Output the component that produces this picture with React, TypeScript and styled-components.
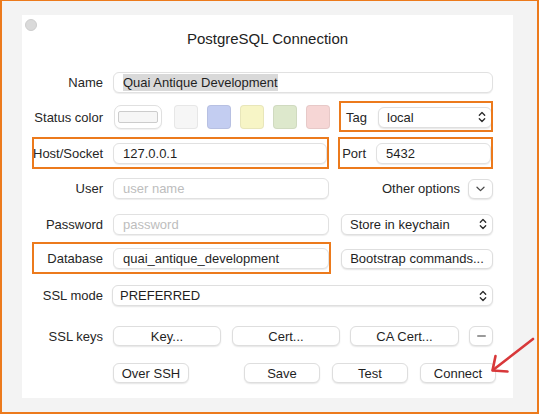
import React from "react";
import styled, { createGlobalStyle } from "styled-components";

const Global = createGlobalStyle`
  html, body { margin: 0; padding: 0; background: #f3f3f3; }
  body { font-family: "Liberation Sans", Arial, sans-serif; font-size: 13px; color: #262626; }
  * { box-sizing: border-box; }
`;

const ORANGE = "#ec7a1c";

const Frame = styled.div`
  position: relative;
  width: 539px;
  height: 414px;
  border: 2px solid ${ORANGE};
  border-top-width: 1px;
  background: #f3f3f3;
  padding: 14px 0 0 20px;
`;

const Panel = styled.div`
  position: relative;
  width: 491px;
  height: 383px;
  background: #ffffff;
`;

const WindowDot = styled.div`
  position: absolute;
  left: 3px;
  top: 4px;
  width: 12px;
  height: 12px;
  border-radius: 50%;
  background: #dadada;
  border: 1px solid #cdcdcd;
`;

const TitleBar = styled.div`
  height: 50px;
  padding-top: 14px;
  text-align: center;
  font-size: 15px;
  line-height: 20px;
  color: #222;
`;

const Form = styled.div`
  display: flex;
  flex-direction: column;
`;

const Row = styled.div<{ $h: number }>`
  display: flex;
  align-items: center;
  height: ${(p) => p.$h}px;
  padding: 0 20px 0 11px;
`;

const Label = styled.div`
  flex: none;
  width: 70px;
  margin-right: 10px;
  text-align: right;
  white-space: nowrap;
  font-size: 13px;
`;

const InlineLabel = styled.div`
  flex: none;
  margin-right: ${(p: { $gap?: number }) => p.$gap ?? 10}px;
  white-space: nowrap;
`;

const Marked = styled.div<{ $t: number; $r: number; $b: number; $l: number; $ml?: string; $mr?: number }>`
  position: relative;
  display: flex;
  align-items: center;
  margin-left: ${(p) => p.$ml ?? "0"};
  margin-right: ${(p) => p.$mr ?? 0}px;
  &::after {
    content: "";
    position: absolute;
    top: ${(p) => -p.$t}px;
    right: ${(p) => -p.$r}px;
    bottom: ${(p) => -p.$b}px;
    left: ${(p) => -p.$l}px;
    border: 2px solid ${ORANGE};
    pointer-events: none;
  }
`;

const Field = styled.div<{ $w?: number; $placeholder?: boolean }>`
  flex: ${(p) => (p.$w ? "none" : "1")};
  width: ${(p) => (p.$w ? `${p.$w}px` : "auto")};
  height: 21px;
  border: 1px solid #e1e1e1;
  border-radius: 6px;
  background: #fff;
  box-shadow: 0 1px 1px rgba(0, 0, 0, 0.07);
  padding: 0 9px;
  display: flex;
  align-items: center;
  white-space: nowrap;
  overflow: hidden;
  color: ${(p) => (p.$placeholder ? "#bdbdbd" : "#1f1f1f")};
`;

const Selected = styled.span`
  background: #d9d9d9;
  padding: 1px 0;
`;

const Popup = styled.div<{ $w?: number; $ml?: string; $pl?: number }>`
  flex: ${(p) => (p.$w ? "none" : "1")};
  width: ${(p) => (p.$w ? `${p.$w}px` : "auto")};
  margin-left: ${(p) => p.$ml ?? "0"};
  height: 21px;
  border: 1px solid #dfdfdf;
  border-radius: 6px;
  background: #fff;
  box-shadow: 0 1px 1.5px rgba(0, 0, 0, 0.1);
  padding: 0 5px 0 ${(p) => p.$pl ?? 8}px;
  display: flex;
  align-items: center;
  justify-content: space-between;
  white-space: nowrap;
  color: #1f1f1f;
`;

const Button = styled.div<{ $w: number; $ml?: string; $mr?: number }>`
  flex: none;
  width: ${(p) => p.$w}px;
  height: 20px;
  margin-left: ${(p) => p.$ml ?? "0"};
  margin-right: ${(p) => p.$mr ?? 0}px;
  border: 1px solid #dedede;
  border-radius: 6px;
  background: #fff;
  box-shadow: 0 1px 1.5px rgba(0, 0, 0, 0.1);
  display: flex;
  align-items: center;
  justify-content: center;
  white-space: nowrap;
  color: #1f1f1f;
`;

const ButtonGroup = styled.div<{ $gap: number; $ml?: string }>`
  display: flex;
  align-items: center;
  gap: ${(p) => p.$gap}px;
  margin-left: ${(p) => p.$ml ?? "0"};
`;

const ColorWell = styled.div`
  flex: none;
  width: 48px;
  height: 24px;
  margin-left: 1px;
  border: 1px solid #e0e0e0;
  border-radius: 7px;
  background: #fff;
  box-shadow: 0 1px 1px rgba(0, 0, 0, 0.06);
  display: flex;
  align-items: center;
  justify-content: center;
`;

const WellInner = styled.div`
  width: 40px;
  height: 12px;
  border: 1px solid #cccccc;
  border-radius: 2px;
  background: #f6f6f6;
`;

const Swatches = styled.div`
  display: flex;
  gap: 9px;
  margin-left: 12px;
`;

const Swatch = styled.div<{ $c: string }>`
  width: 24px;
  height: 24px;
  border-radius: 4px;
  background: ${(p) => p.$c};
  border: 1px solid rgba(0, 0, 0, 0.06);
`;

const OtherText = styled.div`
  margin-left: auto;
  margin-right: 8px;
  white-space: nowrap;
`;

const IconButton = styled.div<{ $w: number }>`
  flex: none;
  width: ${(p) => p.$w}px;
  height: 20px;
  border: 1px solid #dedede;
  border-radius: 6px;
  background: #fff;
  box-shadow: 0 1px 1.5px rgba(0, 0, 0, 0.1);
  display: flex;
  align-items: center;
  justify-content: center;
`;

const MinusBar = styled.div`
  width: 9px;
  height: 2px;
  border-radius: 1px;
  background: #9a9a9a;
`;

const Annotation = styled.svg`
  position: absolute;
  left: -2px;
  top: -1px;
  width: 539px;
  height: 414px;
  pointer-events: none;
`;

const UpDown = () => (
  <svg width="8" height="12" viewBox="0 0 8 12" fill="none">
    <path d="M1.3 4.3 L4 1.5 L6.7 4.3" stroke="#2b2b2b" strokeWidth="1.3" strokeLinecap="round" strokeLinejoin="round" />
    <path d="M1.3 7.7 L4 10.5 L6.7 7.7" stroke="#2b2b2b" strokeWidth="1.3" strokeLinecap="round" strokeLinejoin="round" />
  </svg>
);

const ChevronDown = () => (
  <svg width="9" height="6" viewBox="0 0 9 6" fill="none">
    <path d="M1 1.2 L4.5 4.6 L8 1.2" stroke="#4a4a4a" strokeWidth="1.3" strokeLinecap="round" strokeLinejoin="round" />
  </svg>
);

export default function App() {
  return (
    <>
      <Global />
      <Frame>
        <Panel>
          <WindowDot />
          <TitleBar>PostgreSQL Connection</TitleBar>
          <Form>
            <Row $h={35}>
              <Label>Name</Label>
              <Field>
                <Selected>Quai Antique Development</Selected>
              </Field>
            </Row>

            <Row $h={34}>
              <Label>Status color</Label>
              <ColorWell>
                <WellInner />
              </ColorWell>
              <Swatches>
                <Swatch $c="#f6f6f6" />
                <Swatch $c="#c3cdf1" />
                <Swatch $c="#f7f5c6" />
                <Swatch $c="#dde8cc" />
                <Swatch $c="#f6d6d5" />
              </Swatches>
              <Marked $t={6} $r={1} $b={4} $l={7} $ml="auto" $mr={1}>
                <InlineLabel $gap={11}>Tag</InlineLabel>
                <Popup $w={114} $pl={8}>
                  <span>local</span>
                  <UpDown />
                </Popup>
              </Marked>
            </Row>

            <Row $h={38}>
              <Marked $t={6} $r={2} $b={5} $l={1}>
                <Label>Host/Socket</Label>
                <Field $w={214}>127.0.0.1</Field>
              </Marked>
              <Marked $t={6} $r={2} $b={5} $l={4} $ml="auto" $mr={2}>
                <InlineLabel>Port</InlineLabel>
                <Field $w={115}>5432</Field>
              </Marked>
            </Row>

            <Row $h={33}>
              <Label>User</Label>
              <Field $w={216} $placeholder>user name</Field>
              <OtherText>Other options</OtherText>
              <IconButton $w={25}>
                <ChevronDown />
              </IconButton>
            </Row>

            <Row $h={38}>
              <Label>Password</Label>
              <Field $w={216} $placeholder>password</Field>
              <Popup $w={152} $ml="auto" $pl={8}>
                <span>Store in keychain</span>
                <UpDown />
              </Popup>
            </Row>

            <Row $h={31}>
              <Marked $t={6} $r={2} $b={5} $l={1}>
                <Label>Database</Label>
                <Field $w={216}>quai_antique_development</Field>
              </Marked>
              <Button $w={152} $ml="auto">Bootstrap commands...</Button>
            </Row>

            <Row $h={43}>
              <Label>SSL mode</Label>
              <Popup $ml="-1px" $pl={7}>
                <span>PREFERRED</span>
                <UpDown />
              </Popup>
            </Row>

            <Row $h={38}>
              <Label>SSL keys</Label>
              <ButtonGroup $gap={10}>
                <Button $w={108} $mr={1}>Key...</Button>
                <Button $w={108}>Cert...</Button>
                <Button $w={109}>CA Cert...</Button>
                <IconButton $w={24}>
                  <MinusBar />
                </IconButton>
              </ButtonGroup>
            </Row>

            <Row $h={36}>
              <Label />
              <Button $w={76}>Over SSH</Button>
              <ButtonGroup $gap={12} $ml="auto">
                <Button $w={76}>Save</Button>
                <Button $w={76}>Test</Button>
                <Button $w={76} $mr={-3}>Connect</Button>
              </ButtonGroup>
            </Row>
          </Form>
        </Panel>
        <Annotation viewBox="0 0 539 414">
          <g stroke="#d8383a" strokeWidth="2.6" strokeLinecap="round" strokeLinejoin="round" fill="none">
            <path d="M533 339 L493 370" />
            <path d="M495.5 356 L492.5 370.5 L507.5 371.5" />
          </g>
        </Annotation>
      </Frame>
    </>
  );
}
